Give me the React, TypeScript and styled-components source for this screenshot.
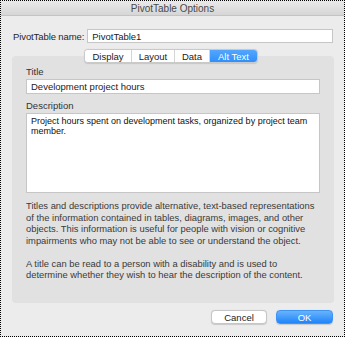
import React from "react";
import styled, { createGlobalStyle } from "styled-components";

const GlobalStyle = createGlobalStyle`
  html, body {
    margin: 0;
    padding: 0;
    background: #ececec;
  }
  * {
    box-sizing: border-box;
  }
`;

const Window = styled.div`
  width: 345px;
  height: 337px;
  border: 1px dotted #000;
  background: #ececec;
  display: flex;
  flex-direction: column;
  font-family: "Liberation Sans", Arial, sans-serif;
  color: #262626;
  overflow: hidden;
`;

const TitleBar = styled.div`
  height: 15px;
  flex: none;
  display: flex;
  align-items: center;
  justify-content: center;
  background: linear-gradient(#e9e9e9, #d6d6d6);
  border-bottom: 1px solid #c4c4c4;
  font-size: 10px;
  color: #4a4a4a;
`;

const Body = styled.div`
  flex: 1;
  display: flex;
  flex-direction: column;
  padding: 13px 11px 0 11px;
`;

const NameRow = styled.div`
  display: flex;
  align-items: center;
  gap: 3px;
  padding-left: 1px;
  font-size: 9.5px;
  letter-spacing: -0.1px;
`;

const TextField = styled.div<{ $h?: number; $grow?: boolean }>`
  flex: ${(p) => (p.$grow ? "1" : "none")};
  height: ${(p) => p.$h ?? 14}px;
  background: #fff;
  border: 1px solid #c6c6c6;
  display: flex;
  align-items: center;
  padding: 0 4px;
  font-size: 9.5px;
  letter-spacing: 0;
  color: #222;
`;

const TabBar = styled.div`
  align-self: center;
  display: flex;
  height: 14px;
  margin: 6px 0 -7px -3px;
  position: relative;
  z-index: 1;
  background: #fff;
  border: 1px solid #c9c9c9;
  border-radius: 4px;
  box-shadow: 0 0.5px 1px rgba(0, 0, 0, 0.12);
  overflow: hidden;
`;

const Tab = styled.div<{ $w: number; $active?: boolean }>`
  width: ${(p) => p.$w}px;
  display: flex;
  align-items: center;
  justify-content: center;
  font-size: 9.5px;
  color: ${(p) => (p.$active ? "#fff" : "#222")};
  background: ${(p) => (p.$active ? "linear-gradient(#54a6fc, #2f8ffb)" : "#fff")};
  & + & {
    border-left: 1px solid #d4d4d4;
  }
`;

const Panel = styled.div`
  width: 322px;
  height: 247px;
  background: #e1e1e1;
  border-radius: 4px;
  padding: 10px 14px 0 14px;
  display: flex;
  flex-direction: column;
`;

const FieldLabel = styled.div<{ $top?: number }>`
  font-size: 9.5px;
  color: #333;
  margin-top: ${(p) => p.$top ?? 0}px;
  margin-bottom: 2px;
`;

const TextArea = styled.div`
  height: 80px;
  background: #fff;
  border: 1px solid #c6c6c6;
  padding: 2px 4px;
  font-size: 9px;
  line-height: 10px;
  color: #111;
`;

const HelpText = styled.p<{ $top?: number }>`
  margin: ${(p) => p.$top ?? 11.5}px 0 0;
  font-size: 9.4px;
  line-height: 11.5px;
  color: #3a3a3a;
`;

const Footer = styled.div`
  display: flex;
  justify-content: flex-end;
  gap: 9px;
  padding: 7px 0 0 0;
`;

const Button = styled.div<{ $primary?: boolean }>`
  width: ${(p) => (p.$primary ? 57 : 56)}px;
  height: 14px;
  border-radius: 4px;
  display: flex;
  align-items: center;
  justify-content: center;
  font-size: 9.5px;
  color: ${(p) => (p.$primary ? "#fff" : "#222")};
  background: ${(p) => (p.$primary ? "linear-gradient(#6ab4fb, #1f84fb)" : "#fff")};
  border: 1px solid ${(p) => (p.$primary ? "#3d94f6" : "#c6c6c6")};
  box-shadow: 0 0.5px 1px rgba(0, 0, 0, 0.15);
`;

const tabs = [
  { name: "Display", w: 46 },
  { name: "Layout", w: 43 },
  { name: "Data", w: 35 },
  { name: "Alt Text", w: 48, active: true },
];

export default function App() {
  return (
    <>
      <GlobalStyle />
      <Window>
        <TitleBar>PivotTable Options</TitleBar>
        <Body>
          <NameRow>
            <span>PivotTable name:</span>
            <TextField $grow>PivotTable1</TextField>
          </NameRow>
          <TabBar>
            {tabs.map((t) => (
              <Tab key={t.name} $w={t.w} $active={t.active}>
                {t.name}
              </Tab>
            ))}
          </TabBar>
          <Panel>
            <FieldLabel>Title</FieldLabel>
            <TextField $h={15}>Development project hours</TextField>
            <FieldLabel $top={6}>Description</FieldLabel>
            <TextArea>
              Project hours spent on development tasks, organized by project team member.
            </TextArea>
            <HelpText $top={7}>
              Titles and descriptions provide alternative, text-based representations of the
              information contained in tables, diagrams, images, and other objects. This
              information is useful for people with vision or cognitive impairments who may not
              be able to see or understand the object.
            </HelpText>
            <HelpText>
              A title can be read to a person with a disability and is used to determine whether
              they wish to hear the description of the content.
            </HelpText>
          </Panel>
          <Footer>
            <Button>Cancel</Button>
            <Button $primary>OK</Button>
          </Footer>
        </Body>
      </Window>
    </>
  );
}
